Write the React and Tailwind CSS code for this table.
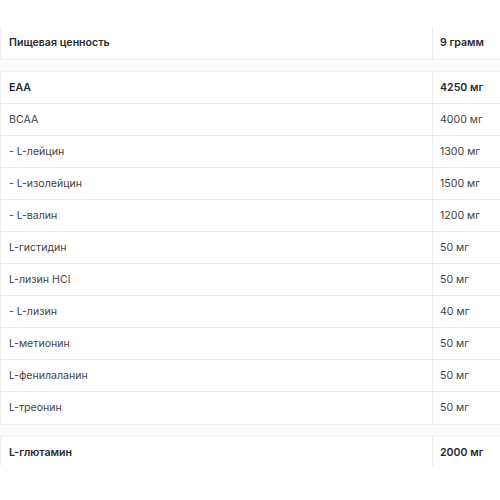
import React from 'react';

const groups = [
  [{ name: 'Пищевая ценность', value: '9 грамм', bold: true }],
  [
    { name: 'EAA', value: '4250 мг', bold: true },
    { name: 'BCAA', value: '4000 мг' },
    { name: '- L-лейцин', value: '1300 мг' },
    { name: '- L-изолейцин', value: '1500 мг' },
    { name: '- L-валин', value: '1200 мг' },
    { name: 'L-гистидин', value: '50 мг' },
    { name: 'L-лизин HCl', value: '50 мг' },
    { name: '- L-лизин', value: '40 мг' },
    { name: 'L-метионин', value: '50 мг' },
    { name: 'L-фенилаланин', value: '50 мг' },
    { name: 'L-треонин', value: '50 мг' },
  ],
  [{ name: 'L-глютамин', value: '2000 мг', bold: true }],
];

function Row({ row, last }) {
  return (
    <div className={`flex h-[32px] ${last ? '' : 'border-b border-[#ececec]'}`}>
      <div className={`flex-1 flex items-center pl-[8px] ${row.bold ? 'font-semibold text-[#2a2a2a]' : 'text-[#444]'}`}>
        {row.name}
      </div>
      <div className={`w-[68px] flex items-center pl-[7px] border-l border-[#ececec] ${row.bold ? 'font-semibold text-[#2a2a2a]' : 'text-[#444]'}`}>
        {row.value}
      </div>
    </div>
  );
}

export default function App() {
  return (
    <div className="w-[500px] h-[500px] bg-white pt-[27px] text-[10.6px]" style={{ fontFamily: 'Inter, "Noto Sans", sans-serif' }}>
      {groups.map((g, gi) => (
        <div key={gi}>
          {gi > 0 && <div className="h-[12px] bg-[#fbfbfb] border-b border-[#f3f3f3]" />}
          <div className={`border-l border-[#f0f0f0] ${gi === groups.length - 1 ? 'h-[29px] overflow-hidden' : 'border-b border-[#ececec]'}`}>
            {g.map((row, ri) => (
              <Row key={ri} row={row} last={ri === g.length - 1} />
            ))}
          </div>
        </div>
      ))}
    </div>
  );
}
